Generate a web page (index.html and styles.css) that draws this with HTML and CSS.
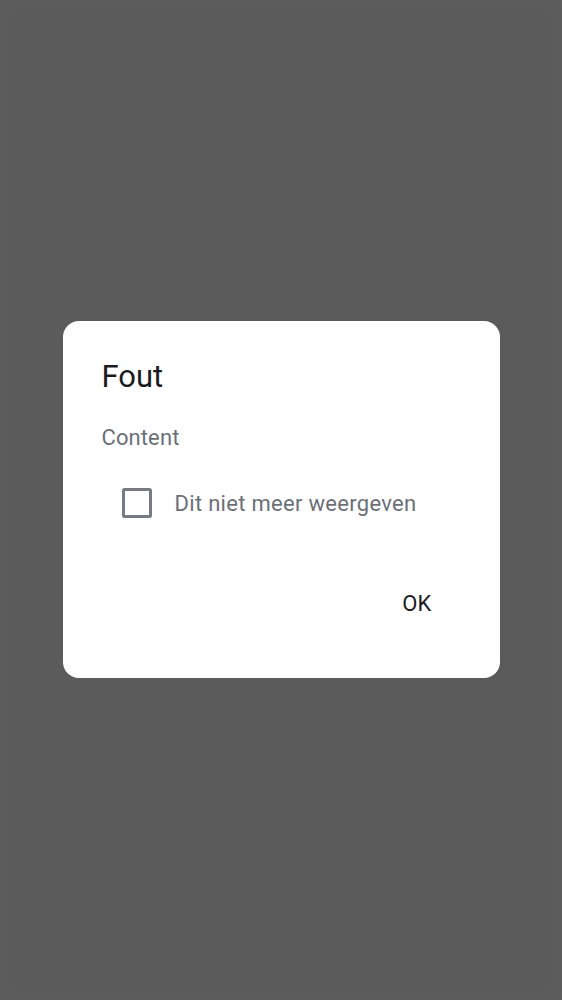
FILE: index.html
```html
<!DOCTYPE html>
<html lang="nl">
<head>
<meta charset="utf-8">
<link rel="stylesheet" href="styles.css">
</head>
<body>
<div class="backdrop">
  <div class="dialog">
    <h1 class="title">Fout</h1>
    <p class="content">Content</p>
    <label class="check-row">
      <span class="checkbox"></span>
      <span class="check-label">Dit niet meer weergeven</span>
    </label>
    <div class="actions">
      <button class="btn">OK</button>
    </div>
  </div>
</div>
</body>
</html>
```
FILE: styles.css
```css
html, body {
  margin: 0;
  padding: 0;
  height: 100%;
}
body {
  background: #5b5b5b;
  font-family: Roboto, "Noto Sans", sans-serif;
}
.backdrop {
  height: 1000px;
  display: flex;
  justify-content: center;
  align-items: flex-start;
  box-shadow: inset 0 0 24px rgba(255,255,255,0.03);
}
.dialog {
  margin-top: 321px;
  width: 437px;
  height: 357px;
  box-sizing: border-box;
  background: #ffffff;
  border-radius: 16px;
  padding: 38px 39px 0 39px;
  display: flex;
  flex-direction: column;
}
.title {
  margin: 0;
  font-size: 31px;
  font-weight: 400;
  color: #1b1b1f;
  line-height: 36px;
}
.content {
  margin: 30px 0 0 0;
  font-size: 22px;
  line-height: 26px;
  letter-spacing: 0.1px;
  color: #6b6f78;
}
.check-row {
  display: flex;
  align-items: center;
  margin-top: 37px;
  padding-left: 20px;
}
.checkbox {
  width: 24px;
  height: 24px;
  border: 3px solid #757b86;
  border-radius: 2.5px;
}
.check-label {
  margin-left: 23px;
  font-size: 22px;
  letter-spacing: 0.3px;
  color: #6b6f78;
}
.actions {
  display: flex;
  justify-content: flex-end;
  margin-top: 74px;
}
.btn {
  border: none;
  background: none;
  font-family: Roboto, "Noto Sans", sans-serif;
  font-size: 22px;
  letter-spacing: 0.2px;
  color: #1b1b1f;
  padding: 0 29px 0 0;
  line-height: 24px;
}
```
